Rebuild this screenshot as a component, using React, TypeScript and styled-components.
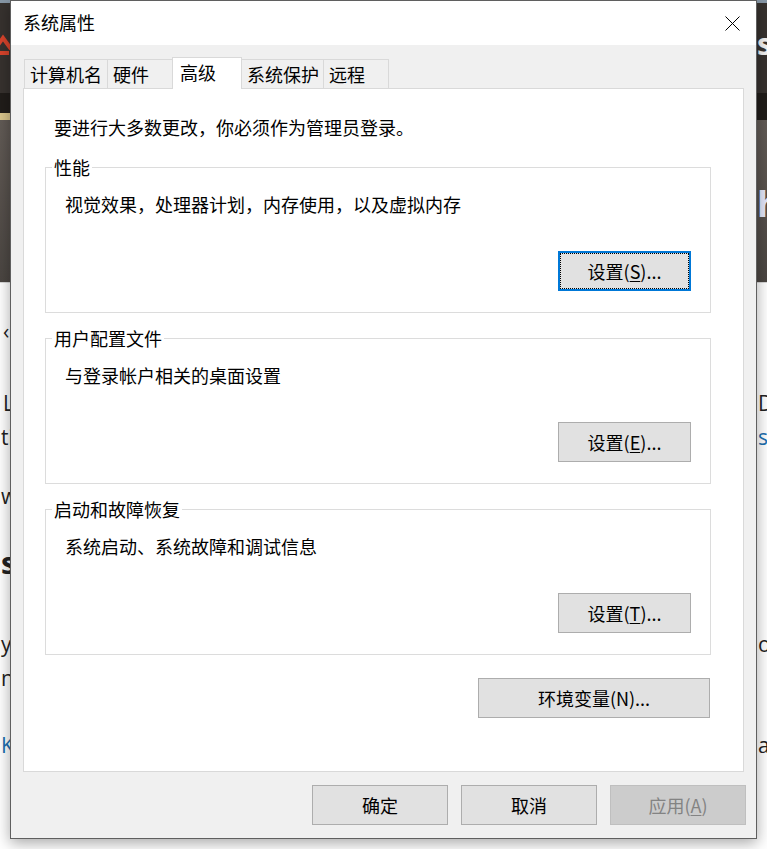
import React from 'react';
import styled, { createGlobalStyle, css } from 'styled-components';

const GlobalStyle = createGlobalStyle`
  html, body {
    margin: 0;
    padding: 0;
  }
  body {
    background: #ffffff;
    overflow: hidden;
    font-family: 'Open Sans', 'Noto Sans', sans-serif;
  }
`;

type BgRow = { top: number; left: string; right?: string; leftColor?: string; rightColor?: string; bold?: boolean; indent?: number };

const bgRows: BgRow[] = [
  { top: 31, left: '‹', indent: 3 },
  { top: 38, left: 'L', right: 'Dl', indent: 3 },
  { top: 0, left: 'ti', right: 's', rightColor: '#1d6fb0' },
  { top: 25, left: 'w' },
  { top: 33, left: 's', bold: true },
  { top: 47, left: 'y(', right: 'o' },
  { top: 0, left: 'n' },
  { top: 33, left: 'K', leftColor: '#1d6fb0', right: 'a' },
];

const tabs = [
  { label: '计算机名', width: 84 },
  { label: '硬件', width: 66 },
  { label: '高级', width: 70, active: true },
  { label: '系统保护', width: 83 },
  { label: '远程', width: 66 },
];

const groups = [
  { title: '性能', text: '视觉效果，处理器计划，内存使用，以及虚拟内存', key: 'S', focused: true },
  { title: '用户配置文件', text: '与登录帐户相关的桌面设置', key: 'E' },
  { title: '启动和故障恢复', text: '系统启动、系统故障和调试信息', key: 'T' },
];

export default function App() {
  return (
    <Page>
      <GlobalStyle />
      <SiteHeader>
        <Logo width="22" height="22" viewBox="0 0 22 22">
          <path d="M3 15 L11 4 L19 15" fill="none" stroke="#d8442c" strokeWidth="4" strokeLinejoin="miter" />
          <rect x="5" y="17" width="12" height="4" fill="#d8442c" />
        </Logo>
        <Brand>s</Brand>
      </SiteHeader>
      <NavBand>
        <ActiveNav />
      </NavBand>
      <Hero>
        <HeroTitle>h</HeroTitle>
      </Hero>
      <Article>
        {bgRows.map((row, i) => (
          <BgLine key={i} $top={row.top} $bold={row.bold}>
            <BgText $color={row.leftColor} $indent={row.indent}>
              {row.left}
            </BgText>
            <BgText $color={row.rightColor}>{row.right}</BgText>
          </BgLine>
        ))}
      </Article>

      <Dialog>
        <TitleBar>
          <Title>系统属性</Title>
          <CloseButton aria-label="关闭">
            <svg width="15" height="15" viewBox="0 0 15 15">
              <path d="M0.5 0.5 L14.5 14.5 M14.5 0.5 L0.5 14.5" stroke="#000" strokeWidth="1" />
            </svg>
          </CloseButton>
        </TitleBar>
        <Body>
          <TabList>
            {tabs.map((t) => (
              <Tab key={t.label} $width={t.width} $active={t.active}>
                {t.label}
              </Tab>
            ))}
          </TabList>
          <Panel>
            <Intro>要进行大多数更改，你必须作为管理员登录。</Intro>
            {groups.map((g) => (
              <Group key={g.title}>
                <Legend>{g.title}</Legend>
                <GroupText>{g.text}</GroupText>
                <Button $width={133} $focused={g.focused}>
                  设置(<Key>{g.key}</Key>)...
                </Button>
              </Group>
            ))}
            <EnvButton $width={232}>环境变量(N)...</EnvButton>
          </Panel>
          <Footer>
            <Button $width={136}>确定</Button>
            <Button $width={136}>取消</Button>
            <Button $width={136} disabled>
              应用(<Key>A</Key>)
            </Button>
          </Footer>
        </Body>
      </Dialog>
    </Page>
  );
}

const Page = styled.div`
  position: relative;
  width: 767px;
  height: 849px;
  overflow: hidden;
  background: #ffffff;
`;

/* the web page behind the dialog */

const SiteHeader = styled.header`
  height: 90px;
  border-top: 3px solid #8797a6;
  background: #37322f;
  display: flex;
  justify-content: space-between;
  align-items: flex-start;
`;

const Logo = styled.svg`
  margin: 31px 0 0 -8px;
`;

const Brand = styled.span`
  margin-top: 26px;
  padding-left: 1px;
  width: 10px;
  overflow: hidden;
  font-size: 30px;
  font-weight: 700;
  line-height: 30px;
  color: #f4f4f4;
`;

const NavBand = styled.nav`
  height: 27px;
  background: #211d1a;
  display: flex;
  align-items: flex-end;
`;

const ActiveNav = styled.span`
  width: 40px;
  height: 7px;
  background: #d9c58c;
`;

const Hero = styled.section`
  height: 162px;
  background: linear-gradient(#625b56, #4b4642);
  display: flex;
  justify-content: flex-end;
  align-items: flex-start;
  border-bottom: 1px solid #d8d8d8;
`;

const HeroTitle = styled.span`
  margin-top: 64px;
  width: 10px;
  overflow: hidden;
  font-size: 36px;
  font-weight: 700;
  line-height: 40px;
  color: #e3e6fa;
`;

const Article = styled.main`
  display: flex;
  flex-direction: column;
`;

const BgLine = styled.div<{ $top: number; $bold?: boolean }>`
  display: grid;
  grid-template-columns: 757px 1fr;
  height: 34px;
  margin-top: ${(p) => p.$top}px;
  font-size: ${(p) => (p.$bold ? 30 : 21)}px;
  font-weight: ${(p) => (p.$bold ? 700 : 400)};
  line-height: 34px;
  white-space: nowrap;
  overflow: hidden;
`;

const BgText = styled.span<{ $color?: string; $indent?: number }>`
  color: ${(p) => p.$color ?? '#222222'};
  padding-left: ${(p) => p.$indent ?? 1}px;
`;

/* the dialog */

const Dialog = styled.div`
  position: absolute;
  left: 10px;
  top: 0;
  width: 747px;
  height: 839px;
  box-sizing: border-box;
  border: 1px solid #5f5f5f;
  background: #f0f0f0;
  box-shadow: 0 4px 14px rgba(0, 0, 0, 0.35);
  display: flex;
  flex-direction: column;
  font-family: 'Noto Sans CJK SC', 'Noto Sans', sans-serif;
  font-size: 18px;
  color: #000000;
`;

const TitleBar = styled.div`
  height: 44px;
  flex: none;
  background: #ffffff;
  display: flex;
  align-items: center;
  padding-left: 12px;
`;

const Title = styled.span`
  line-height: 1;
  margin-top: -3px;
`;

const CloseButton = styled.button`
  margin-left: auto;
  width: 47px;
  height: 44px;
  padding: 0;
  border: none;
  background: transparent;
  display: flex;
  align-items: center;
  justify-content: center;
`;

const Body = styled.div`
  flex: 1;
  display: flex;
  flex-direction: column;
  padding: 12px 0 13px;
`;

const TabList = styled.div`
  height: 31px;
  margin: 0 12px;
  padding-left: 1px;
  display: flex;
  align-items: flex-end;
`;

const Tab = styled.div<{ $width: number; $active?: boolean }>`
  box-sizing: border-box;
  width: ${(p) => p.$width}px;
  height: 29px;
  padding-left: 5px;
  border: 1px solid #d9d9d9;
  border-bottom: none;
  background: #f0f0f0;
  display: flex;
  align-items: center;
  line-height: 1;
  white-space: nowrap;

  & + & {
    margin-left: -1px;
  }

  ${(p) =>
    p.$active &&
    css`
      position: relative;
      z-index: 1;
      height: 32px;
      margin-bottom: -1px;
      padding: 0 0 3px 7px;
      background: #ffffff;
    `}
`;

const Panel = styled.div`
  flex: 1;
  margin: 0 12px;
  box-sizing: border-box;
  border: 1px solid #d9d9d9;
  background: #ffffff;
  padding: 26px 32px 0 21px;
  display: flex;
  flex-direction: column;
`;

const Intro = styled.p`
  margin: 0 0 0 9px;
  line-height: 24px;
`;

const Group = styled.section`
  position: relative;
  height: 146px;
  box-sizing: border-box;
  border: 1px solid #dcdcdc;
  padding: 24px 19px 0;
  display: flex;
  flex-direction: column;
  margin-top: 25px;

  ${Intro} + & {
    margin-top: 28px;
  }
`;

const Legend = styled.span`
  position: absolute;
  top: -12px;
  left: 6px;
  padding: 0 2px;
  background: #ffffff;
  line-height: 22px;
`;

const GroupText = styled.p`
  margin: 0;
  line-height: 24px;
`;

const Button = styled.button<{ $width: number; $focused?: boolean }>`
  position: relative;
  box-sizing: border-box;
  width: ${(p) => p.$width}px;
  height: 40px;
  padding: 0;
  border: 1px solid #adadad;
  background: #e1e1e1;
  color: #000000;
  font: inherit;
  line-height: 1;
  display: flex;
  align-items: center;
  justify-content: center;
  white-space: nowrap;

  ${GroupText} + & {
    align-self: flex-end;
    margin-top: 35px;
  }

  ${(p) =>
    p.$focused &&
    css`
      border: 2px solid #0078d7;

      &::after {
        content: '';
        position: absolute;
        inset: 0;
        border: 1px dotted #000000;
      }
    `}

  &:disabled {
    background: #cccccc;
    border-color: #bfbfbf;
    color: #838383;
  }
`;

const EnvButton = styled(Button)`
  align-self: flex-end;
  margin: 23px 1px 0 0;
`;

const Key = styled.span`
  text-decoration: underline;
  text-underline-offset: 2px;
`;

const Footer = styled.div`
  margin-top: 13px;
  padding-right: 10px;
  display: flex;
  justify-content: flex-end;
  gap: 13px;
`;
